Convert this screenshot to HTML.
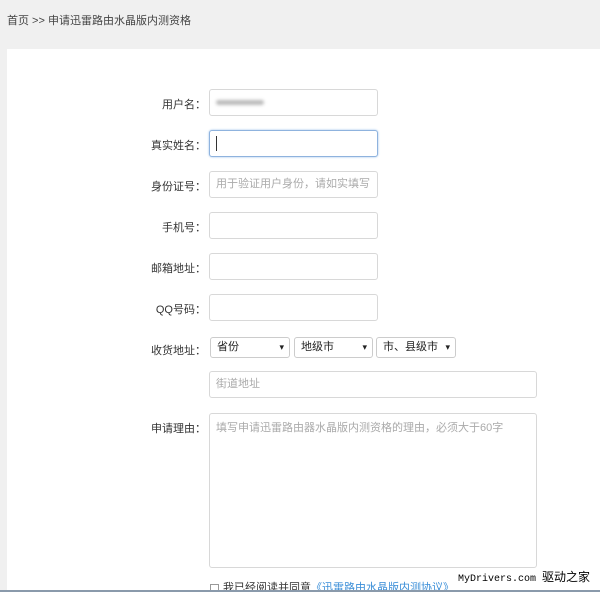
<!DOCTYPE html><html><head><meta charset="utf-8"><style>
html,body{margin:0;width:600px;height:592px;overflow:hidden}
body{background:#f0f0f0;font-family:"Liberation Sans","Noto Sans CJK SC",sans-serif;font-size:11px;color:#333;position:relative}
.bc{position:absolute;left:7px;top:12px;font-size:11px;color:#444}
.panel{position:absolute;left:7px;top:49px;right:0;bottom:0;background:#fff}
.l{position:absolute;right:394px;text-align:right;color:#333;font-size:11px;white-space:nowrap}
.i{position:absolute;left:209px;border:1px solid #d8d8d8;border-radius:3px;background:#fff;color:#aaa;font-size:11px;line-height:25px;padding-left:6px;box-sizing:border-box;width:169px;height:27px;white-space:nowrap;overflow:hidden}
.s{position:absolute;top:337px;height:21px;border:1px solid #ccc;border-radius:3px;box-sizing:border-box;font-size:11px;line-height:19px;padding-left:6px;color:#222;white-space:nowrap}
.s:after{content:"▾";position:absolute;right:5px;top:0;font-size:9px}
.bottom{position:absolute;left:0;right:0;top:590px;height:2px;background:#8a9aab}
</style></head><body>
<div class="bc">首页 &gt;&gt; 申请迅雷路由水晶版内测资格</div>
<div class="panel"></div>
<div class="l" style="top:96px">用户名：</div>
<div class="i" style="top:89px"><span style="display:inline-block;width:48px;height:5px;background:#bbb;border-radius:3px;filter:blur(1.5px);vertical-align:middle"></span></div>
<div class="l" style="top:137px">真实姓名：</div>
<div class="i" style="top:130px;border:1px solid #8fb3de;box-shadow:0 0 2px #9cc0ea"><span style="display:inline-block;width:1px;height:15px;background:#333;vertical-align:middle"></span></div>
<div class="l" style="top:178px">身份证号：</div>
<div class="i" style="top:171px">用于验证用户身份，请如实填写</div>
<div class="l" style="top:219px">手机号：</div>
<div class="i" style="top:212px"></div>
<div class="l" style="top:260px">邮箱地址：</div>
<div class="i" style="top:253px"></div>
<div class="l" style="top:301px">QQ号码：</div>
<div class="i" style="top:294px"></div>
<div class="l" style="top:342px">收货地址：</div>
<div class="s" style="left:210px;width:80px">省份</div>
<div class="s" style="left:294px;width:79px">地级市</div>
<div class="s" style="left:376px;width:80px">市、县级市</div>
<div class="i" style="top:371px;width:328px">街道地址</div>
<div class="l" style="top:420px">申请理由：</div>
<div class="i" style="top:413px;width:328px;height:155px;line-height:14px;padding-top:7px">填写申请迅雷路由器水晶版内测资格的理由，必须大于60字</div>
<div style="position:absolute;left:210px;top:579px;font-size:11px;color:#333;white-space:nowrap"><span style="display:inline-block;width:7px;height:7px;border:1px solid #999;vertical-align:middle;margin-right:4px"></span>我已经阅读并同意<span style="color:#3a8ed8">《迅雷路由水晶版内测协议》</span></div>
<div style="position:absolute;left:456px;top:568px;padding:0 2px;font-family:'Liberation Mono','Noto Sans CJK SC',monospace;font-size:10px;color:#000;background:#fff;white-space:nowrap">MyDrivers.com <span style="font-family:'Noto Sans CJK SC',sans-serif;font-size:12px">驱动之家</span></div>
<div class="bottom"></div>
</body></html>
